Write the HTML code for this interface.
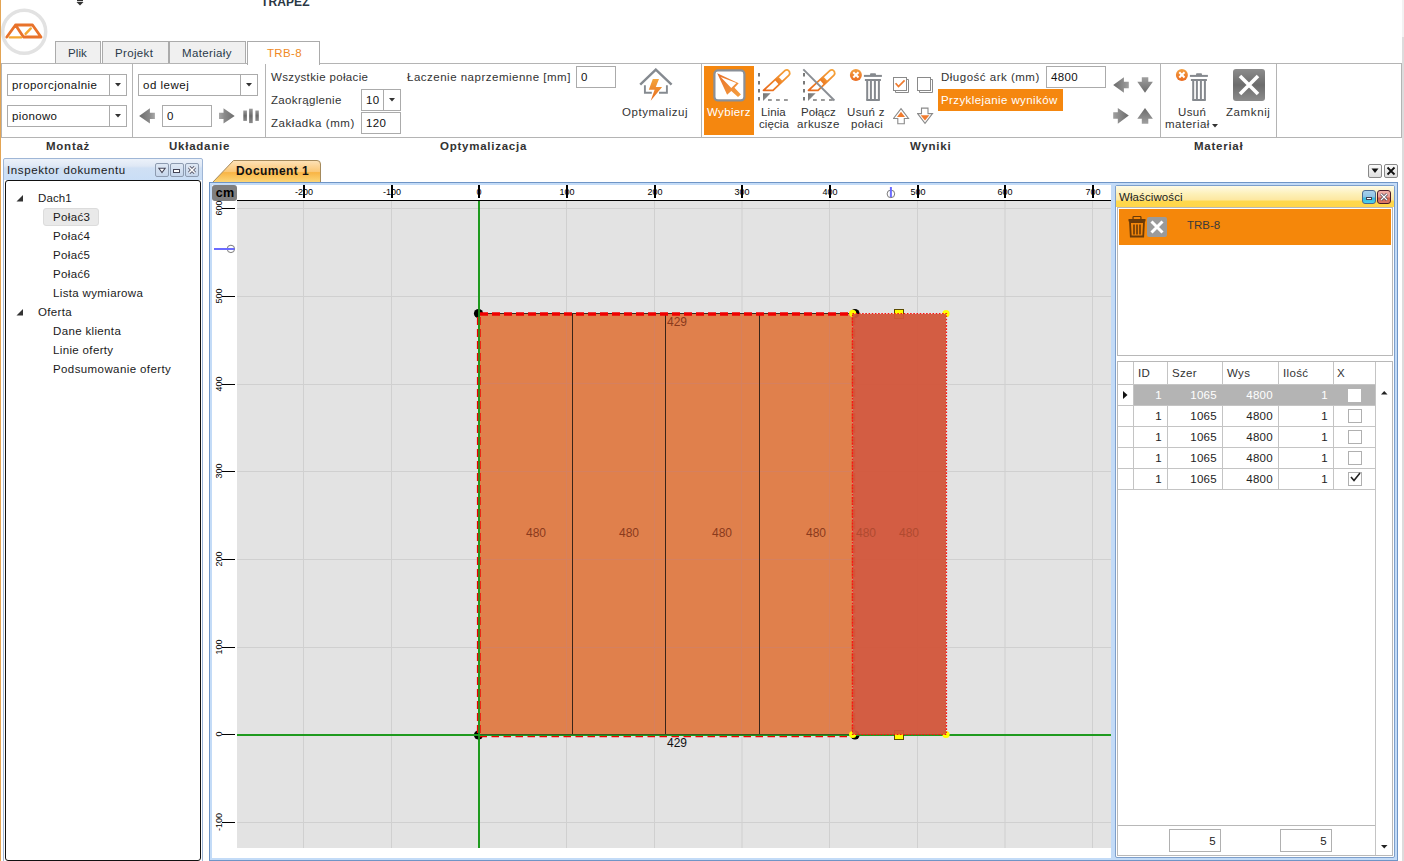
<!DOCTYPE html>
<html><head><meta charset="utf-8">
<style>
*{margin:0;padding:0;box-sizing:border-box}
html,body{width:1404px;height:861px;overflow:hidden;background:#fff;position:relative}
body{font-family:"Liberation Sans",sans-serif;font-size:12px;color:#333}
.a{position:absolute}
.t{position:absolute;white-space:nowrap;line-height:14px;font-size:11.5px;letter-spacing:0.35px}
.b{font-weight:bold;letter-spacing:0.5px}
.box{position:absolute;border:1px solid #ababab;background:#fff}
.vs{position:absolute;width:1px;background:#b4b4b4}
.grp{position:absolute;top:139px;font-weight:bold;font-size:11.5px;line-height:14px;color:#333;letter-spacing:0.75px;white-space:nowrap}
.tab{position:absolute;top:41px;height:23px;border:1px solid #ababab;border-bottom:none;background:#f0f0f0}
</style></head><body>
<!-- left orange edge -->
<div class="a" style="left:0;top:0;width:1px;height:861px;background:#e3a453"></div>

<!-- TOP -->
<div id="top">
 <svg class="a" style="left:0;top:8px" width="50" height="50" viewBox="0 8 50 50">
  <circle cx="24.2" cy="31.8" r="21.5" fill="none" stroke="#e2e2e2" stroke-width="3.5"/>
  <path d="M6.8 37 L15.5 25 L32.5 25 L41 37 L23.5 37 L15.5 25" fill="none" stroke="#e8722a" stroke-width="2.8" stroke-linejoin="round" stroke-linecap="round"/>
  <path d="M9.8 37.4 L21 37.4" stroke="#f5a830" stroke-width="2.4" stroke-linecap="round"/>
  <path d="M25.6 33.8 L30.8 28.4" stroke="#f5a830" stroke-width="2.4" stroke-linecap="round"/>
 </svg>
 <svg class="a" style="left:76px;top:0" width="8" height="6"><rect x="1" y="0" width="6" height="1.2" fill="#333"/><path d="M0.5 2 L7.5 2 L4 5.5 Z" fill="#333"/></svg>
 <div class="t b" style="left:261px;top:-5px;color:#2a3744;font-size:12px;letter-spacing:0.1px">TRAPEZ</div>
</div>

<!-- TABS -->
<div class="tab" style="left:55px;width:46px"></div>
<div class="t" style="left:68px;top:46px;color:#2b3a4a;letter-spacing:0.1px">Plik</div>
<div class="tab" style="left:102px;width:67px"></div>
<div class="t" style="left:115px;top:46px;color:#2b3a4a">Projekt</div>
<div class="tab" style="left:169px;width:77px"></div>
<div class="t" style="left:182px;top:46px;color:#2b3a4a">Materiały</div>

<!-- RIBBON -->
<div class="a" style="left:1px;top:63px;width:1401px;height:75px;border:1px solid #b4b4b4;background:#fff"></div>
<div class="tab" style="left:247px;width:73px;height:24px;background:#fff"></div>
<div class="t" style="left:267px;top:46px;color:#f08a24">TRB-8</div>
<div class="vs" style="left:132px;top:64px;height:73px"></div>
<div class="vs" style="left:265px;top:64px;height:73px"></div>
<div class="vs" style="left:701px;top:64px;height:73px"></div>
<div class="vs" style="left:1160px;top:64px;height:73px"></div>
<div class="vs" style="left:1276px;top:64px;height:73px"></div>

<div class="grp" style="left:46px">Montaż</div>
<div class="grp" style="left:169px">Układanie</div>
<div class="grp" style="left:440px">Optymalizacja</div>
<div class="grp" style="left:910px">Wyniki</div>
<div class="grp" style="left:1194px">Materiał</div>

<div id="ribbon">
 <!-- Montaz -->
 <div class="box" style="left:7px;top:74px;width:120px;height:22px"></div>
 <div class="vs" style="left:109px;top:75px;height:20px;background:#ababab"></div>
 <div class="t" style="left:12px;top:78px;color:#111;letter-spacing:0.45px">proporcjonalnie</div>
 <svg class="a" style="left:115px;top:83px" width="6" height="4"><path d="M0 0H6L3 3.5Z" fill="#333"/></svg>
 <div class="box" style="left:7px;top:105px;width:120px;height:22px"></div>
 <div class="vs" style="left:109px;top:106px;height:20px;background:#ababab"></div>
 <div class="t" style="left:12px;top:109px;color:#111">pionowo</div>
 <svg class="a" style="left:115px;top:114px" width="6" height="4"><path d="M0 0H6L3 3.5Z" fill="#333"/></svg>
 <!-- Ukladanie -->
 <div class="box" style="left:138px;top:74px;width:120px;height:22px"></div>
 <div class="vs" style="left:240px;top:75px;height:20px;background:#ababab"></div>
 <div class="t" style="left:143px;top:78px;color:#111;letter-spacing:0.5px">od lewej</div>
 <svg class="a" style="left:246px;top:83px" width="6" height="4"><path d="M0 0H6L3 3.5Z" fill="#333"/></svg>
 <svg class="a" style="left:139px;top:107px" width="17" height="18"><defs><linearGradient id="ga" x1="0" y1="0" x2="1" y2="0"><stop offset="0" stop-color="#6c6c6c"/><stop offset="0.65" stop-color="#8a8a8a"/><stop offset="1" stop-color="#a8a8a8"/></linearGradient></defs><path d="M0.1 8.9 L10.9 1.3 V5.8 H15.9 V12.1 H10.9 V16.5 Z" fill="url(#ga)"/></svg>
 <div class="box" style="left:162px;top:105px;width:50px;height:22px"></div>
 <div class="t" style="left:167px;top:109px;color:#111">0</div>
 <svg class="a" style="left:219px;top:107px" width="17" height="18"><defs><linearGradient id="gb" x1="0" y1="0" x2="1" y2="0"><stop offset="0" stop-color="#a8a8a8"/><stop offset="0.35" stop-color="#8a8a8a"/><stop offset="1" stop-color="#6c6c6c"/></linearGradient></defs><path d="M15.7 8.9 L4.5 1.3 V5.8 H0 V12.1 H4.5 V16.5 Z" fill="url(#gb)"/></svg>
 <svg class="a" style="left:243px;top:108px" width="16" height="16"><defs><linearGradient id="gc" x1="0" y1="0" x2="0" y2="1"><stop offset="0" stop-color="#9a9a9a"/><stop offset="0.5" stop-color="#6a6a6a"/><stop offset="1" stop-color="#8a8a8a"/></linearGradient></defs><rect x="0.3" y="2.5" width="3.6" height="10.4" fill="url(#gc)"/><rect x="6.1" y="0.7" width="3.6" height="14.4" fill="url(#gc)"/><rect x="12.4" y="2.5" width="3.4" height="10.4" fill="url(#gc)"/></svg>
 <!-- Optymalizacja -->
 <div class="t" style="left:271px;top:70px">Wszystkie połacie</div>
 <div class="t" style="left:271px;top:93px">Zaokrąglenie</div>
 <div class="t" style="left:271px;top:116px;letter-spacing:0.55px">Zakładka (mm)</div>
 <div class="box" style="left:361px;top:89px;width:40px;height:22px"></div>
 <div class="vs" style="left:383px;top:90px;height:20px;background:#ababab"></div>
 <div class="t" style="left:366px;top:93px;color:#111">10</div>
 <svg class="a" style="left:389px;top:98px" width="6" height="4"><path d="M0 0H6L3 3.5Z" fill="#333"/></svg>
 <div class="box" style="left:361px;top:112px;width:40px;height:22px"></div>
 <div class="t" style="left:366px;top:116px;color:#111">120</div>
 <div class="t" style="left:407px;top:70px;letter-spacing:0.5px">Łaczenie naprzemienne [mm]</div>
 <div class="box" style="left:576px;top:66px;width:40px;height:22px"></div>
 <div class="t" style="left:581px;top:70px;color:#111">0</div>
 <svg class="a" style="left:638px;top:68px" width="36" height="34">
  <defs><linearGradient id="gbolt" x1="0" y1="0" x2="0" y2="1"><stop offset="0" stop-color="#f4a53c"/><stop offset="1" stop-color="#e86a1c"/></linearGradient></defs>
  <path d="M2.2 16.7 L17.8 1.6 L33.6 16.7" fill="none" stroke="#858a90" stroke-width="2.4"/>
  <path d="M6.9 17.2 V24.8 H13.8 M21 24.8 H28.9 V17.2" fill="none" stroke="#858a90" stroke-width="1.9"/>
  <path d="M14.8 11.1 H21 L17.8 19 H24.1 L12.7 32.7 L16.6 21.8 H10.8 Z" fill="url(#gbolt)"/>
 </svg>
 <div class="t" style="left:622px;top:105px;letter-spacing:0.55px">Optymalizuj</div>
 <!-- Wyniki -->
 <div class="a" style="left:704px;top:66px;width:50px;height:69px;background:#f5870f"></div>
 <svg class="a" style="left:712px;top:68px" width="34" height="34">
  <defs><linearGradient id="garr" x1="0" y1="0" x2="1" y2="1"><stop offset="0" stop-color="#e8702a"/><stop offset="1" stop-color="#f5a040"/></linearGradient></defs>
  <rect x="2.4" y="2.4" width="30" height="30" rx="3.5" fill="#fff" stroke="#8a9098" stroke-width="2.2"/>
  <path d="M5.2 5.3 L26.7 15.2 L22.5 19.7 L28.9 26.4 L26 29 L19.3 22.9 L15.1 26.8 Z M8.7 9.1 L19.3 20 L24.4 14.9 Z" fill="url(#garr)" fill-rule="evenodd"/>
 </svg>
 <div class="t" style="left:707px;top:105px;color:#fff">Wybierz</div>
 <svg class="a" style="left:757px;top:68px" width="36" height="34">
  <defs><linearGradient id="gpen757" x1="0" y1="1" x2="1" y2="0"><stop offset="0" stop-color="#e8681a"/><stop offset="1" stop-color="#f6a53a"/></linearGradient><linearGradient id="gtri757" x1="0" y1="0" x2="1" y2="1"><stop offset="0" stop-color="#707070"/><stop offset="1" stop-color="#a0a0a0"/></linearGradient></defs>
  <path d="M2 5 V33" stroke="#7a7a7a" stroke-width="2" stroke-dasharray="3.5 4.5"/>
  <path d="M11 32 H32" stroke="#9a9a9a" stroke-width="2" stroke-dasharray="3.8 4.2"/>
  <path d="M6 25.2 H13.7 L6 32.9 Z" fill="url(#gtri757)"/>
  <path d="M6.5 22.3 L27.6 2.8 Q30.6 0.6 32.4 3.6 Q33.4 5.6 31.8 7.4 L16 22.3 Z" fill="#fff" stroke="url(#gpen757)" stroke-width="1.8" stroke-linejoin="round"/>
  <path d="M17.6 11.75 L21.3 8.4 L25.75 13.3 L22.1 16.7 Z" fill="url(#gpen757)"/>
  
 </svg>
 <div class="t" style="left:761px;top:105px;letter-spacing:0.1px">Linia</div>
 <div class="t" style="left:759px;top:117px;letter-spacing:0.1px">cięcia</div>
 <svg class="a" style="left:802px;top:68px" width="36" height="34">
  <defs><linearGradient id="gpen802" x1="0" y1="1" x2="1" y2="0"><stop offset="0" stop-color="#e8681a"/><stop offset="1" stop-color="#f6a53a"/></linearGradient><linearGradient id="gtri802" x1="0" y1="0" x2="1" y2="1"><stop offset="0" stop-color="#707070"/><stop offset="1" stop-color="#a0a0a0"/></linearGradient></defs>
  <path d="M2 5 V33" stroke="#7a7a7a" stroke-width="2" stroke-dasharray="3.5 4.5"/>
  <path d="M11 32 H32" stroke="#9a9a9a" stroke-width="2" stroke-dasharray="3.8 4.2"/>
  <path d="M6 25.2 H13.7 L6 32.9 Z" fill="url(#gtri802)"/>
  <path d="M6.5 22.3 L27.6 2.8 Q30.6 0.6 32.4 3.6 Q33.4 5.6 31.8 7.4 L16 22.3 Z" fill="#fff" stroke="url(#gpen802)" stroke-width="1.8" stroke-linejoin="round"/>
  <path d="M17.6 11.75 L21.3 8.4 L25.75 13.3 L22.1 16.7 Z" fill="url(#gpen802)"/>
  <path d="M1.3 1.4 L32.4 32.5" stroke="#8a8e94" stroke-width="1.9"/>
 </svg>
 <div class="t" style="left:801px;top:105px;letter-spacing:0.05px">Połącz</div>
 <div class="t" style="left:797px;top:117px">arkusze</div>
 <svg class="a" style="left:849px;top:68px" width="36" height="34">
  <defs><linearGradient id="gx849" x1="0" y1="0" x2="0" y2="1"><stop offset="0" stop-color="#f4a040"/><stop offset="1" stop-color="#ea6c22"/></linearGradient></defs>
  <circle cx="6.9" cy="6.9" r="6" fill="url(#gx849)"/>
  <path d="M4.3 4.3 L9.5 9.5 M9.5 4.3 L4.3 9.5" stroke="#fff" stroke-width="2"/>
  <rect x="14.9" y="6.9" width="18" height="2" fill="#85898e"/>
  <rect x="21" y="5.2" width="6" height="2.2" rx="1" fill="#85898e"/>
  <rect x="15.9" y="11" width="16" height="2" fill="#85898e"/>
  <rect x="17.2" y="12" width="2" height="20.5" fill="#85898e"/>
  <rect x="20.9" y="12" width="2" height="20.5" fill="#85898e"/>
  <rect x="24.9" y="12" width="2" height="20.5" fill="#85898e"/>
  <rect x="28.9" y="12" width="2" height="20.5" fill="#85898e"/>
  <rect x="17.2" y="31" width="13.7" height="2" rx="1" fill="#85898e"/>
 </svg>
 <div class="t" style="left:847px;top:105px">Usuń z</div>
 <div class="t" style="left:851px;top:117px">połaci</div>
 <svg class="a" style="left:892px;top:76px" width="18" height="18">
  <path d="M3.5 14.2 V16.5 H16.5 V3.5 H14.2" fill="none" stroke="#8a8a8a" stroke-width="1"/>
  <rect x="1.5" y="1.5" width="13" height="13" fill="#fff" stroke="#8a8a8a" stroke-width="1"/>
  <path d="M3.6 7.3 L6.5 10.6 L12.6 4.4" fill="none" stroke="#f07b2e" stroke-width="1.7"/>
 </svg>
 <svg class="a" style="left:916px;top:76px" width="18" height="18">
  <path d="M3.5 14.2 V16.5 H16.5 V3.5 H14.2" fill="none" stroke="#8a8a8a" stroke-width="1"/>
  <rect x="1.5" y="1.5" width="13" height="13" fill="#fff" stroke="#8a8a8a" stroke-width="1"/>
 </svg>
 <svg class="a" style="left:893px;top:107px" width="17" height="18">
  <path d="M8 1.7 L15.5 11.5 H11.3 V16.7 H4.8 V11.5 H0.5 Z" fill="#fff" stroke="#8a8a8a" stroke-width="1.1"/>
  <path d="M8 4.7 L12 9.9 H4 Z" fill="#f07b2e"/>
 </svg>
 <svg class="a" style="left:917px;top:107px" width="17" height="18">
  <path d="M8 16.4 L15.5 6.6 H11 V1.1 H4.5 V6.6 H0.6 Z" fill="#fff" stroke="#8a8a8a" stroke-width="1.1"/>
  <path d="M3.6 8.2 H12.4 L8 13.4 Z" fill="#f07b2e"/>
 </svg>
 <div class="t" style="left:941px;top:70px;letter-spacing:0.5px">Długość ark (mm)</div>
 <div class="box" style="left:1046px;top:66px;width:60px;height:22px"></div>
 <div class="t" style="left:1051px;top:70px;color:#111">4800</div>
 <div class="a" style="left:938px;top:89px;width:125px;height:22px;background:#f5870f"></div>
 <div class="t" style="left:941px;top:93px;color:#fff;letter-spacing:0.4px">Przyklejanie wyników</div>
 <svg class="a" style="left:1113px;top:77px" width="17" height="17"><defs><linearGradient id="gl1" x1="0" y1="0" x2="1" y2="0"><stop offset="0" stop-color="#6a6a6a"/><stop offset="1" stop-color="#a0a0a0"/></linearGradient></defs><path d="M0.2 8 L10.9 0.2 V4.8 H15.8 V11.3 H10.9 V15.8 Z" fill="url(#gl1)"/></svg>
 <svg class="a" style="left:1137px;top:77px" width="17" height="17"><defs><linearGradient id="gl2" x1="0" y1="1" x2="0" y2="0"><stop offset="0" stop-color="#6a6a6a"/><stop offset="1" stop-color="#a0a0a0"/></linearGradient></defs><path d="M8 15.8 L15.9 4.8 H11.3 V0.2 H4.8 V4.8 H0.3 Z" fill="url(#gl2)"/></svg>
 <svg class="a" style="left:1113px;top:107px" width="17" height="18"><defs><linearGradient id="gl3" x1="1" y1="0" x2="0" y2="0"><stop offset="0" stop-color="#6a6a6a"/><stop offset="1" stop-color="#a0a0a0"/></linearGradient></defs><path d="M15.8 8.6 L4.8 1.1 V5.3 H0.2 V11.8 H4.8 V16.7 Z" fill="url(#gl3)"/></svg>
 <svg class="a" style="left:1137px;top:107px" width="17" height="18"><defs><linearGradient id="gl4" x1="0" y1="0" x2="0" y2="1"><stop offset="0" stop-color="#6a6a6a"/><stop offset="1" stop-color="#a0a0a0"/></linearGradient></defs><path d="M8 1.1 L15.9 11.8 H11.3 V16.7 H4.8 V11.8 H0.3 Z" fill="url(#gl4)"/></svg>
 <!-- Material -->
 <svg class="a" style="left:1175px;top:68px" width="36" height="34">
  <defs><linearGradient id="gx1175" x1="0" y1="0" x2="0" y2="1"><stop offset="0" stop-color="#f4a040"/><stop offset="1" stop-color="#ea6c22"/></linearGradient></defs>
  <circle cx="6.9" cy="6.9" r="6" fill="url(#gx1175)"/>
  <path d="M4.3 4.3 L9.5 9.5 M9.5 4.3 L4.3 9.5" stroke="#fff" stroke-width="2"/>
  <rect x="14.9" y="6.9" width="18" height="2" fill="#85898e"/>
  <rect x="21" y="5.2" width="6" height="2.2" rx="1" fill="#85898e"/>
  <rect x="15.9" y="11" width="16" height="2" fill="#85898e"/>
  <rect x="17.2" y="12" width="2" height="20.5" fill="#85898e"/>
  <rect x="20.9" y="12" width="2" height="20.5" fill="#85898e"/>
  <rect x="24.9" y="12" width="2" height="20.5" fill="#85898e"/>
  <rect x="28.9" y="12" width="2" height="20.5" fill="#85898e"/>
  <rect x="17.2" y="31" width="13.7" height="2" rx="1" fill="#85898e"/>
 </svg>
 <div class="t" style="left:1178px;top:105px">Usuń</div>
 <div class="t" style="left:1165px;top:117px;letter-spacing:0.5px">materiał</div>
 <svg class="a" style="left:1212px;top:124px" width="6" height="4"><path d="M0 0H6L3 3.5Z" fill="#333"/></svg>
 <svg class="a" style="left:1233px;top:69px" width="32" height="32">
  <defs><linearGradient id="gz" x1="0" y1="0" x2="0" y2="1"><stop offset="0" stop-color="#8c8c8c"/><stop offset="0.5" stop-color="#6c6c6c"/><stop offset="1" stop-color="#8c8c8c"/></linearGradient></defs>
  <rect x="0" y="0" width="32" height="32" rx="3" fill="url(#gz)"/>
  <path d="M7 7 L25 25 M25 7 L7 25" stroke="#fff" stroke-width="3.6"/>
 </svg>
 <div class="t" style="left:1226px;top:105px;letter-spacing:0.6px">Zamknij</div>
</div>


<!-- LEFT PANEL -->
<div id="left">
 <div class="a" style="left:3px;top:158px;width:200px;height:710px;border:1px solid #9fb6d6;border-radius:2px;background:linear-gradient(#ecf2fa 0px,#dfe8f5 7px,#d0e0f4 9px,#cadef6 21px,#fff 21px)"></div>
 <div class="t" style="left:7px;top:163px;color:#1a1a1a;letter-spacing:0.6px">Inspektor dokumentu</div>
 <div class="a" style="left:155px;top:163px;width:14px;height:14px;border:1px solid #8d9bb0;border-radius:2px;background:linear-gradient(#dfe8f4,#c6d6ec)"></div>
 <svg class="a" style="left:158px;top:167px" width="8" height="7"><path d="M0.8 1.2 H7.2 L4 5.6 Z" fill="#fff" stroke="#445" stroke-width="1.1"/></svg>
 <div class="a" style="left:170px;top:163px;width:14px;height:14px;border:1px solid #8d9bb0;border-radius:2px;background:linear-gradient(#dfe8f4,#c6d6ec)"></div>
 <div class="a" style="left:173px;top:169px;width:7px;height:4px;border:1px solid #445;background:#fff"></div>
 <div class="a" style="left:185px;top:163px;width:14px;height:14px;border:1px solid #8d9bb0;border-radius:2px;background:linear-gradient(#dfe8f4,#c6d6ec)"></div>
 <svg class="a" style="left:188px;top:166px" width="8" height="8"><path d="M1.2 1.2 L6.8 6.8 M6.8 1.2 L1.2 6.8" stroke="#556" stroke-width="3.3"/><path d="M1.2 1.2 L6.8 6.8 M6.8 1.2 L1.2 6.8" stroke="#fff" stroke-width="1.5"/></svg>
 <div class="a" style="left:5px;top:180px;width:196px;height:681px;border:1px solid #111;border-radius:3px;background:#fff"></div>
 <svg class="a" style="left:16px;top:195px" width="8" height="7"><path d="M7 0 V6.5 H0.5 Z" fill="#333"/></svg>
 <div class="t" style="left:38px;top:191px;color:#1a1a1a;letter-spacing:0.1px">Dach1</div>
 <div class="a" style="left:43px;top:208px;width:56px;height:18px;background:#e9e9e9;border:1px solid #dcdcdc;border-radius:3px"></div>
 <div class="t" style="left:53px;top:210px;color:#1a1a1a">Połać3</div>
 <div class="t" style="left:53px;top:229px;color:#1a1a1a">Połać4</div>
 <div class="t" style="left:53px;top:248px;color:#1a1a1a">Połać5</div>
 <div class="t" style="left:53px;top:267px;color:#1a1a1a">Połać6</div>
 <div class="t" style="left:53px;top:286px;color:#1a1a1a">Lista wymiarowa</div>
 <svg class="a" style="left:16px;top:309px" width="8" height="7"><path d="M7 0 V6.5 H0.5 Z" fill="#333"/></svg>
 <div class="t" style="left:38px;top:305px;color:#1a1a1a">Oferta</div>
 <div class="t" style="left:53px;top:324px;color:#1a1a1a">Dane klienta</div>
 <div class="t" style="left:53px;top:343px;color:#1a1a1a">Linie oferty</div>
 <div class="t" style="left:53px;top:362px;color:#1a1a1a;letter-spacing:0.4px">Podsumowanie oferty</div>
</div>


<!-- DOC AREA -->
<div id="doc">
<svg class="a" style="left:210px;top:158px" width="114" height="26">
 <defs><linearGradient id="dt" x1="0" y1="0" x2="0" y2="1"><stop offset="0" stop-color="#fde2b8"/><stop offset="0.5" stop-color="#fbc877"/><stop offset="0.55" stop-color="#f9b545"/><stop offset="1" stop-color="#fcd77a"/></linearGradient></defs>
 <path d="M2.5 24.5 L23.5 2.5 H107 Q110.5 2.5 110.5 6 V24.5" fill="url(#dt)" stroke="#a58a5c" stroke-width="1"/>
</svg>
<div class="t b" style="left:236px;top:164px;color:#111;font-size:12px;letter-spacing:0.45px">Document 1</div>
<div class="a" style="left:1368px;top:164px;width:14px;height:14px;border:1px solid #888;border-radius:2px;background:linear-gradient(#fafafa,#dedede)"></div>
<svg class="a" style="left:1371px;top:168px" width="8" height="6"><path d="M0.5 0.5 H7.5 L4 5 Z" fill="#111"/></svg>
<div class="a" style="left:1384px;top:164px;width:14px;height:14px;border:1px solid #888;border-radius:2px;background:linear-gradient(#fafafa,#dedede)"></div>
<svg class="a" style="left:1386px;top:166px" width="10" height="10"><path d="M1.5 1.5 L8.5 8.5 M8.5 1.5 L1.5 8.5" stroke="#111" stroke-width="1.8"/></svg>
<div class="a" style="left:209px;top:182px;width:1189px;height:679px;border:1px solid #6f95c6;background:#c3dbf7"></div>
<div class="a" style="left:212px;top:185px;width:899px;height:673px;background:#fff"></div>
<div class="a" style="left:237px;top:201px;width:874px;height:647px;background:#e3e3e3"></div>
<div class="a" style="left:303px;top:201px;width:1px;height:647px;background:#d0d0d0"></div>
<div class="a" style="left:391px;top:201px;width:1px;height:647px;background:#d0d0d0"></div>
<div class="a" style="left:478px;top:201px;width:1px;height:647px;background:#d0d0d0"></div>
<div class="a" style="left:566px;top:201px;width:1px;height:647px;background:#d0d0d0"></div>
<div class="a" style="left:654px;top:201px;width:1px;height:647px;background:#d0d0d0"></div>
<div class="a" style="left:741px;top:201px;width:2px;height:647px;background:#d9d9d9"></div>
<div class="a" style="left:829px;top:201px;width:1px;height:647px;background:#d0d0d0"></div>
<div class="a" style="left:917px;top:201px;width:1px;height:647px;background:#d0d0d0"></div>
<div class="a" style="left:1004px;top:201px;width:2px;height:647px;background:#d9d9d9"></div>
<div class="a" style="left:1092px;top:201px;width:1px;height:647px;background:#d0d0d0"></div>
<div class="a" style="left:237px;top:208px;width:874px;height:1px;background:#d0d0d0"></div>
<div class="a" style="left:237px;top:296px;width:874px;height:1px;background:#d0d0d0"></div>
<div class="a" style="left:237px;top:384px;width:874px;height:1px;background:#d0d0d0"></div>
<div class="a" style="left:237px;top:471px;width:874px;height:1px;background:#d0d0d0"></div>
<div class="a" style="left:237px;top:559px;width:874px;height:1px;background:#d0d0d0"></div>
<div class="a" style="left:237px;top:647px;width:874px;height:1px;background:#d0d0d0"></div>
<div class="a" style="left:237px;top:734px;width:874px;height:1px;background:#d0d0d0"></div>
<div class="a" style="left:237px;top:822px;width:874px;height:1px;background:#d0d0d0"></div>
<div class="a" style="left:237px;top:200px;width:874px;height:1px;background:#000"></div>
<div class="a" style="left:212px;top:185px;width:25px;height:16px;background:#7f7f7f;border-radius:3px"></div>
<div class="a b" style="left:213px;top:186px;width:24px;text-align:center;font-size:12.5px;line-height:14px;color:#000;letter-spacing:0.2px">cm</div>
<div class="a" style="left:288px;top:187px;width:32px;text-align:center;font-size:9px;line-height:10px;color:#000">-200</div>
<div class="a" style="left:303px;top:185px;width:2px;height:13px;background:#000"></div>
<div class="a" style="left:376px;top:187px;width:32px;text-align:center;font-size:9px;line-height:10px;color:#000">-100</div>
<div class="a" style="left:391px;top:185px;width:2px;height:13px;background:#000"></div>
<div class="a" style="left:463px;top:187px;width:32px;text-align:center;font-size:9px;line-height:10px;color:#000">0</div>
<div class="a" style="left:478px;top:185px;width:2px;height:13px;background:#000"></div>
<div class="a" style="left:551px;top:187px;width:32px;text-align:center;font-size:9px;line-height:10px;color:#000">100</div>
<div class="a" style="left:566px;top:185px;width:2px;height:13px;background:#000"></div>
<div class="a" style="left:639px;top:187px;width:32px;text-align:center;font-size:9px;line-height:10px;color:#000">200</div>
<div class="a" style="left:654px;top:185px;width:2px;height:13px;background:#000"></div>
<div class="a" style="left:726px;top:187px;width:32px;text-align:center;font-size:9px;line-height:10px;color:#000">300</div>
<div class="a" style="left:741px;top:185px;width:2px;height:13px;background:#000"></div>
<div class="a" style="left:814px;top:187px;width:32px;text-align:center;font-size:9px;line-height:10px;color:#000">400</div>
<div class="a" style="left:829px;top:185px;width:2px;height:13px;background:#000"></div>
<div class="a" style="left:902px;top:187px;width:32px;text-align:center;font-size:9px;line-height:10px;color:#000">500</div>
<div class="a" style="left:917px;top:185px;width:2px;height:13px;background:#000"></div>
<div class="a" style="left:989px;top:187px;width:32px;text-align:center;font-size:9px;line-height:10px;color:#000">600</div>
<div class="a" style="left:1004px;top:185px;width:2px;height:13px;background:#000"></div>
<div class="a" style="left:1077px;top:187px;width:32px;text-align:center;font-size:9px;line-height:10px;color:#000">700</div>
<div class="a" style="left:1092px;top:185px;width:2px;height:13px;background:#000"></div>
<div class="a" style="left:203px;top:817px;width:32px;height:10px;text-align:center;font-size:9px;line-height:10px;color:#000;transform:rotate(-90deg)">-100</div>
<div class="a" style="left:222px;top:822px;width:13px;height:1px;background:#000"></div>
<div class="a" style="left:203px;top:729px;width:32px;height:10px;text-align:center;font-size:9px;line-height:10px;color:#000;transform:rotate(-90deg)">0</div>
<div class="a" style="left:222px;top:734px;width:13px;height:1px;background:#000"></div>
<div class="a" style="left:203px;top:642px;width:32px;height:10px;text-align:center;font-size:9px;line-height:10px;color:#000;transform:rotate(-90deg)">100</div>
<div class="a" style="left:222px;top:647px;width:13px;height:1px;background:#000"></div>
<div class="a" style="left:203px;top:554px;width:32px;height:10px;text-align:center;font-size:9px;line-height:10px;color:#000;transform:rotate(-90deg)">200</div>
<div class="a" style="left:222px;top:559px;width:13px;height:1px;background:#000"></div>
<div class="a" style="left:203px;top:466px;width:32px;height:10px;text-align:center;font-size:9px;line-height:10px;color:#000;transform:rotate(-90deg)">300</div>
<div class="a" style="left:222px;top:471px;width:13px;height:1px;background:#000"></div>
<div class="a" style="left:203px;top:379px;width:32px;height:10px;text-align:center;font-size:9px;line-height:10px;color:#000;transform:rotate(-90deg)">400</div>
<div class="a" style="left:222px;top:384px;width:13px;height:1px;background:#000"></div>
<div class="a" style="left:203px;top:291px;width:32px;height:10px;text-align:center;font-size:9px;line-height:10px;color:#000;transform:rotate(-90deg)">500</div>
<div class="a" style="left:222px;top:296px;width:13px;height:1px;background:#000"></div>
<div class="a" style="left:203px;top:203px;width:32px;height:10px;text-align:center;font-size:9px;line-height:10px;color:#000;transform:rotate(-90deg)">600</div>
<div class="a" style="left:222px;top:208px;width:13px;height:1px;background:#000"></div>
<svg class="a" style="left:212px;top:240px" width="25" height="18"><circle cx="18.9" cy="8.9" r="3.7" fill="none" stroke="#7a7a7a" stroke-width="1"/><path d="M2 9 H22.5" stroke="#6b6bff" stroke-width="2"/></svg>
<svg class="a" style="left:880px;top:185px" width="20" height="16"><circle cx="10.9" cy="8.9" r="3.8" fill="none" stroke="#7a7a7a" stroke-width="1"/><path d="M10.9 2 V12.2" stroke="#6b6bff" stroke-width="2"/></svg>
<svg class="a" style="left:237px;top:201px" width="874" height="647" viewBox="237 201 874 647">
 <path d="M237 735 H1111" stroke="#1f9a1f" stroke-width="2"/>
 <path d="M479 201 V848" stroke="#1f9a1f" stroke-width="2"/>
 <circle cx="478.5" cy="313.5" r="4.6" fill="#000"/>
 <circle cx="478.5" cy="735" r="4.6" fill="#000"/>
 <circle cx="855" cy="313.5" r="4.6" fill="#000"/>
 <circle cx="855" cy="735" r="4.6" fill="#000"/>
 <rect x="480" y="314" width="372.5" height="420" fill="#e0804c"/>
 <path d="M480 559.5 H852 M480 647.5 H852 M480 471.5 H852 M480 383.5 H852 M566.5 314 V734 M654.5 314 V734 M741.5 314 V734 M829.5 314 V734" stroke="#d6805e" stroke-width="1"/>
 <path d="M480 313.5 H852" stroke="#3a2a20" stroke-width="1"/>
 <path d="M572.5 314 V734 M665.5 314 V734 M759.5 314 V734" stroke="#3a2418" stroke-width="1"/>
 <path d="M480 314 H852.5" stroke="#f00000" stroke-width="3.6" stroke-dasharray="8 4"/>
 <path d="M479.5 735.6 H852.5" stroke="#f00000" stroke-width="3.2" stroke-dasharray="7.5 4.5"/>
 <path d="M478.8 317 V734" stroke="#f00000" stroke-width="3.8" stroke-dasharray="8 4"/>
 <path d="M853.5 317 V734" stroke="#e02000" stroke-width="3.5" stroke-dasharray="8 4" stroke-opacity="0.8"/>
 <path d="M237 735 H1111" stroke="#1f9a1f" stroke-width="2"/>
 <path d="M479 201 V848" stroke="#1f9a1f" stroke-width="2" stroke-opacity="0.85"/>
 <path d="M480 734.5 H852" stroke="#3a3a20" stroke-width="1" stroke-opacity="0.6"/>
 <circle cx="852.7" cy="313.3" r="3.6" fill="#ffff00"/>
 <circle cx="946" cy="313.7" r="3.6" fill="#ffff00"/>
 <circle cx="852.7" cy="734.5" r="3.6" fill="#ffff00"/>
 <circle cx="946" cy="734.5" r="3.6" fill="#ffff00"/>
 <rect x="894.5" y="309.5" width="9" height="9" fill="#ffff00" stroke="#5a4a00" stroke-width="1"/>
 <rect x="894.5" y="730.5" width="9" height="9" fill="#ffff00" stroke="#5a4a00" stroke-width="1"/>
 <rect x="852.5" y="314" width="93.5" height="420.5" fill="#d2553a" fill-opacity="0.95"/>
 <path d="M852.5 313.5 H946.5 V734.5 H852.5 Z" fill="none" stroke="#ff1010" stroke-width="1.2" stroke-dasharray="1.6 1.6"/>
</svg>
<div class="a" style="left:516px;top:527px;width:40px;text-align:center;font-size:12px;line-height:12px;color:#8a3a1c">480</div>
<div class="a" style="left:609px;top:527px;width:40px;text-align:center;font-size:12px;line-height:12px;color:#8a3a1c">480</div>
<div class="a" style="left:702px;top:527px;width:40px;text-align:center;font-size:12px;line-height:12px;color:#8a3a1c">480</div>
<div class="a" style="left:796px;top:527px;width:40px;text-align:center;font-size:12px;line-height:12px;color:#8a3a1c">480</div>
<div class="a" style="left:846px;top:527px;width:40px;text-align:center;font-size:12px;line-height:12px;color:#b04a30">480</div>
<div class="a" style="left:889px;top:527px;width:40px;text-align:center;font-size:12px;line-height:12px;color:#b04a30">480</div>
<div class="a" style="left:657px;top:316px;width:40px;text-align:center;font-size:12px;line-height:12px;color:#8a3a1c">429</div>
<div class="a" style="left:657px;top:737px;width:40px;text-align:center;font-size:12px;line-height:12px;color:#111">429</div>
</div>

<!-- PROPERTIES -->
<div id="props">
<div class="a" style="left:1402px;top:0;width:2px;height:37px;background:#f2f2f2"></div>
<div class="a" style="left:1402px;top:37px;width:2px;height:824px;background:#dcdcdc"></div>
<div class="a" style="left:1115px;top:185px;width:280px;height:673px;border:1px solid #7d9fcb;border-radius:2px;background:#fff"></div>
<div class="a" style="left:1116px;top:186px;width:278px;height:21px;background:linear-gradient(#fffbe6 0px,#fdf0b8 8px,#fde7a0 14px,#ffd84c 15px,#ffd64a 21px)"></div>
<div class="t" style="left:1119px;top:190px;color:#1a1a1a;letter-spacing:0.1px">Właściwości</div>
<div class="a" style="left:1362px;top:190px;width:14px;height:14px;border:1px solid #4a6a90;border-radius:3px;background:linear-gradient(#a8d0ec 0,#8ec4e6 6px,#35b8dc 7px,#5ad8f0 14px)"></div>
<div class="a" style="left:1366px;top:197px;width:6px;height:3px;background:#fff;border:1px solid #445"></div>
<div class="a" style="left:1377px;top:190px;width:14px;height:14px;border:1px solid #4a1a28;border-radius:3px;background:linear-gradient(#f0b0a8 0,#e89890 6px,#d06048 7px,#e08878 14px)"></div>
<svg class="a" style="left:1379px;top:192px" width="10" height="10"><path d="M2 2 L8 8 M8 2 L2 8" stroke="#445" stroke-width="2.6"/><path d="M2 2 L8 8 M8 2 L2 8" stroke="#fff" stroke-width="1.2"/></svg>
<div class="a" style="left:1117px;top:207px;width:276px;height:149px;border:1px solid #b8b8b8;background:#fff"></div>
<div class="a" style="left:1119px;top:209px;width:272px;height:36px;background:#f5870a"></div>
<svg class="a" style="left:1127px;top:216px" width="20" height="22">
 <rect x="1.5" y="3" width="17" height="2.4" fill="#6a3a08"/>
 <rect x="6" y="0.5" width="8" height="3" rx="1" fill="none" stroke="#6a3a08" stroke-width="1.2"/>
 <path d="M3 6 H17 L16.2 20.5 H3.8 Z" fill="none" stroke="#6a3a08" stroke-width="1.8"/>
 <path d="M7 8.5 V18.5 M10 8.5 V18.5 M13 8.5 V18.5" stroke="#6a3a08" stroke-width="1.6"/>
</svg>
<svg class="a" style="left:1147px;top:217px" width="20" height="20">
 <rect x="0" y="0" width="20" height="20" rx="2" fill="#9a9a9a"/>
 <path d="M4.5 4.5 L15.5 15.5 M15.5 4.5 L4.5 15.5" stroke="#fff" stroke-width="3"/>
</svg>
<div class="t" style="left:1187px;top:218px;color:#3a3a3a;letter-spacing:0px">TRB-8</div>
<div class="a" style="left:1117px;top:361px;width:276px;height:495px;border:1px solid #b8b8b8;background:#fff"></div>
<div class="a" style="left:1133px;top:362px;width:1px;height:128px;background:#c4c4c4"></div>
<div class="a" style="left:1167px;top:362px;width:1px;height:128px;background:#c4c4c4"></div>
<div class="a" style="left:1222px;top:362px;width:1px;height:128px;background:#c4c4c4"></div>
<div class="a" style="left:1278px;top:362px;width:1px;height:128px;background:#c4c4c4"></div>
<div class="a" style="left:1333px;top:362px;width:1px;height:128px;background:#c4c4c4"></div>
<div class="a" style="left:1375px;top:362px;width:1px;height:128px;background:#c4c4c4"></div>
<div class="a" style="left:1375px;top:362px;width:1px;height:493px;background:#c4c4c4"></div>
<div class="a" style="left:1118px;top:384px;width:257px;height:1px;background:#c4c4c4"></div>
<div class="a" style="left:1118px;top:405px;width:257px;height:1px;background:#c4c4c4"></div>
<div class="a" style="left:1118px;top:426px;width:257px;height:1px;background:#c4c4c4"></div>
<div class="a" style="left:1118px;top:447px;width:257px;height:1px;background:#c4c4c4"></div>
<div class="a" style="left:1118px;top:468px;width:257px;height:1px;background:#c4c4c4"></div>
<div class="a" style="left:1118px;top:489px;width:257px;height:1px;background:#c4c4c4"></div>
<div class="a" style="left:1118px;top:825px;width:257px;height:1px;background:#b8b8b8"></div>
<div class="a" style="left:1134px;top:385px;width:241px;height:20px;background:#b4b4b4"></div>
<div class="t" style="left:1138px;top:366px;color:#333">ID</div>
<div class="t" style="left:1172px;top:366px;color:#333">Szer</div>
<div class="t" style="left:1227px;top:366px;color:#333">Wys</div>
<div class="t" style="left:1283px;top:366px;color:#333">Ilość</div>
<div class="t" style="left:1337px;top:366px;color:#333">X</div>
<div class="t" style="left:1102px;width:60px;text-align:right;top:388px;color:#fff;letter-spacing:0.3px">1</div>
<div class="t" style="left:1157px;width:60px;text-align:right;top:388px;color:#fff;letter-spacing:0.3px">1065</div>
<div class="t" style="left:1213px;width:60px;text-align:right;top:388px;color:#fff;letter-spacing:0.3px">4800</div>
<div class="t" style="left:1268px;width:60px;text-align:right;top:388px;color:#fff;letter-spacing:0.3px">1</div>
<div class="a" style="left:1348px;top:389px;width:13px;height:13px;background:#fff"></div>
<div class="t" style="left:1102px;width:60px;text-align:right;top:409px;color:#222;letter-spacing:0.3px">1</div>
<div class="t" style="left:1157px;width:60px;text-align:right;top:409px;color:#222;letter-spacing:0.3px">1065</div>
<div class="t" style="left:1213px;width:60px;text-align:right;top:409px;color:#222;letter-spacing:0.3px">4800</div>
<div class="t" style="left:1268px;width:60px;text-align:right;top:409px;color:#222;letter-spacing:0.3px">1</div>
<div class="a" style="left:1348px;top:409px;width:14px;height:14px;border:1px solid #b0b0b0;background:#fff"></div>
<div class="t" style="left:1102px;width:60px;text-align:right;top:430px;color:#222;letter-spacing:0.3px">1</div>
<div class="t" style="left:1157px;width:60px;text-align:right;top:430px;color:#222;letter-spacing:0.3px">1065</div>
<div class="t" style="left:1213px;width:60px;text-align:right;top:430px;color:#222;letter-spacing:0.3px">4800</div>
<div class="t" style="left:1268px;width:60px;text-align:right;top:430px;color:#222;letter-spacing:0.3px">1</div>
<div class="a" style="left:1348px;top:430px;width:14px;height:14px;border:1px solid #b0b0b0;background:#fff"></div>
<div class="t" style="left:1102px;width:60px;text-align:right;top:451px;color:#222;letter-spacing:0.3px">1</div>
<div class="t" style="left:1157px;width:60px;text-align:right;top:451px;color:#222;letter-spacing:0.3px">1065</div>
<div class="t" style="left:1213px;width:60px;text-align:right;top:451px;color:#222;letter-spacing:0.3px">4800</div>
<div class="t" style="left:1268px;width:60px;text-align:right;top:451px;color:#222;letter-spacing:0.3px">1</div>
<div class="a" style="left:1348px;top:451px;width:14px;height:14px;border:1px solid #b0b0b0;background:#fff"></div>
<div class="t" style="left:1102px;width:60px;text-align:right;top:472px;color:#222;letter-spacing:0.3px">1</div>
<div class="t" style="left:1157px;width:60px;text-align:right;top:472px;color:#222;letter-spacing:0.3px">1065</div>
<div class="t" style="left:1213px;width:60px;text-align:right;top:472px;color:#222;letter-spacing:0.3px">4800</div>
<div class="t" style="left:1268px;width:60px;text-align:right;top:472px;color:#222;letter-spacing:0.3px">1</div>
<div class="a" style="left:1348px;top:472px;width:14px;height:14px;border:1px solid #b0b0b0;background:#fff"></div>
<svg class="a" style="left:1350px;top:472px" width="11" height="10"><path d="M1 5 L4 8.5 L10 1" fill="none" stroke="#222" stroke-width="1.6"/></svg>
<svg class="a" style="left:1123px;top:391px" width="5" height="8"><path d="M0 0 L4.5 4 L0 8Z" fill="#111"/></svg>
<svg class="a" style="left:1381px;top:391px" width="7" height="4"><path d="M0 3.5 H6.5 L3.25 0Z" fill="#222"/></svg>
<svg class="a" style="left:1381px;top:845px" width="7" height="4"><path d="M0 0 H6.5 L3.25 3.5Z" fill="#222"/></svg>
<div class="a" style="left:1169px;top:829px;width:52px;height:23px;border:1px solid #b0b0b0;background:#fff"></div>
<div class="t" style="left:1160px;width:56px;text-align:right;top:834px;color:#222">5</div>
<div class="a" style="left:1280px;top:829px;width:52px;height:23px;border:1px solid #b0b0b0;background:#fff"></div>
<div class="t" style="left:1271px;width:56px;text-align:right;top:834px;color:#222">5</div>
</div>

</body></html>
